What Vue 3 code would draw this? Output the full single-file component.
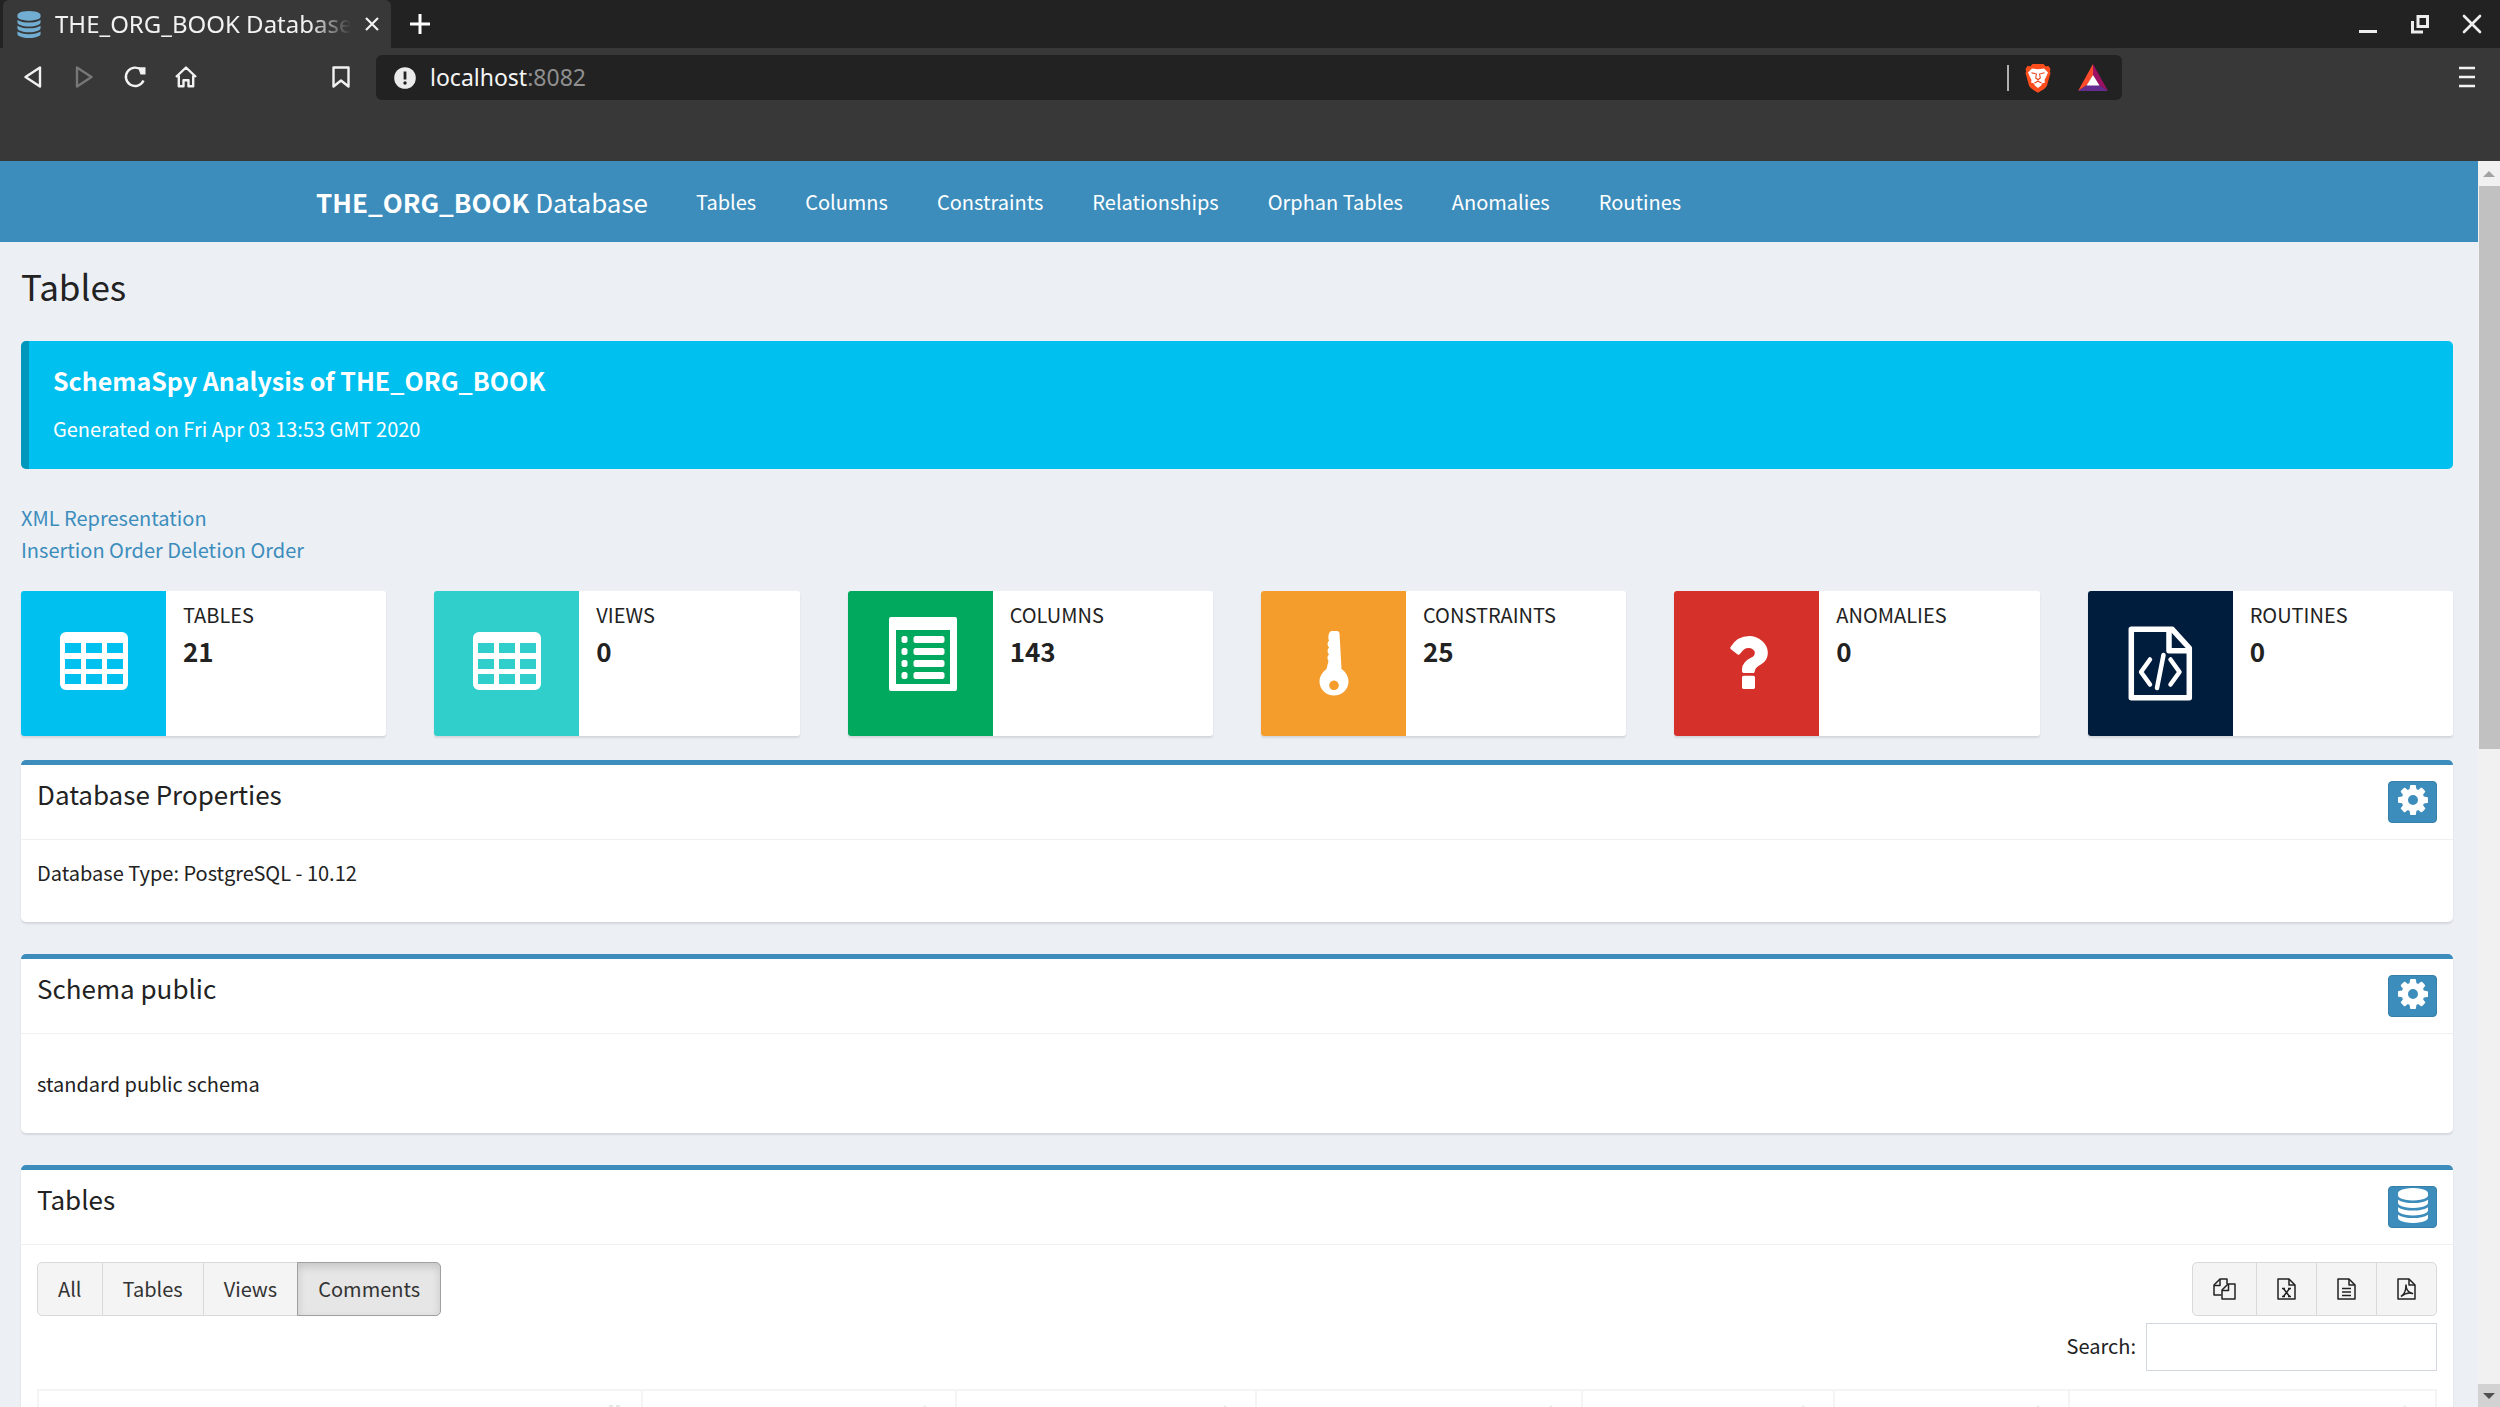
<template>
  <div class="browser">
    <div class="tab-bar">
      <div class="tab">
        <svg class="tab__icon" viewBox="128 0 1536 1792" aria-hidden="true">
          <path :d="databasePath" />
        </svg>
        <span class="tab__title">THE_ORG_BOOK Database</span>
        <button class="chrome-button tab__close" type="button" aria-label="Close tab">
          <svg width="14" height="14" viewBox="0 0 14 14">
            <path d="M1 1l12 12M13 1L1 13" stroke="#f2f2f2" stroke-width="2.2" />
          </svg>
        </button>
      </div>
      <button class="chrome-button tab-bar__new" type="button" aria-label="New tab">
        <svg width="20" height="20" viewBox="0 0 20 20">
          <path d="M10 0v20M0 10h20" stroke="#fff" stroke-width="3" />
        </svg>
      </button>
      <div class="window-controls">
        <button class="chrome-button" type="button" aria-label="Minimize">
          <svg width="20" height="20" viewBox="0 0 20 20">
            <path d="M1 17.500h18" stroke="#eee" stroke-width="3" />
          </svg>
        </button>
        <button class="chrome-button" type="button" aria-label="Restore">
          <svg width="20" height="20" viewBox="0 0 20 20" fill="none" stroke="#eee" stroke-width="3">
            <path d="M8 2.500h9.500v10H8z" />
            <path d="M2.500 7v11H13" />
          </svg>
        </button>
        <button class="chrome-button" type="button" aria-label="Close window">
          <svg width="20" height="20" viewBox="0 0 20 20">
            <path d="M2 2l16 16M18 2L2 18" stroke="#eee" stroke-width="2.600" stroke-linecap="round" />
          </svg>
        </button>
      </div>
    </div>

    <div class="toolbar">
      <div class="toolbar__nav">
        <button class="chrome-button" type="button" aria-label="Back">
          <svg width="24" height="24" viewBox="0 0 24 24" class="line-icon">
            <path d="M19 2.500v19L4.500 12z" />
          </svg>
        </button>
        <button class="chrome-button" type="button" aria-label="Forward" disabled>
          <svg width="24" height="24" viewBox="0 0 24 24" class="line-icon line-icon--muted">
            <path d="M5 2.500v19L19.500 12z" />
          </svg>
        </button>
        <button class="chrome-button" type="button" aria-label="Reload">
          <svg width="24" height="24" viewBox="0 0 24 24" class="line-icon">
            <path d="M20.500 15.500A9.200 9.200 0 1 1 18.500 5.200" />
            <path d="M15 2.200h7.500v7.300h-5z" fill="#f2f2f2" stroke="none" />
          </svg>
        </button>
        <button class="chrome-button" type="button" aria-label="Home">
          <svg width="24" height="24" viewBox="0 0 24 24" class="line-icon">
            <path d="M2 12L12 2.500 22 12M4.800 10.500v10.700h4.700v-6h5v6h4.700V10.500" />
          </svg>
        </button>
      </div>
      <button class="chrome-button toolbar__bookmark" type="button" aria-label="Bookmark">
        <svg width="20" height="24" viewBox="0 0 20 24" class="line-icon">
          <path d="M2.500 2.500h15v19L10 15.500l-7.500 6z" />
        </svg>
      </button>
      <div class="address">
        <svg width="22" height="22" viewBox="0 0 22 22" aria-hidden="true">
          <circle cx="11" cy="11" r="10.800" fill="#ebebeb" />
          <path d="M11 4.500v8" stroke="#222" stroke-width="2.800" />
          <circle cx="11" cy="16" r="1.700" fill="#222" />
        </svg>
        <div class="address__url">localhost<span class="address__port">:8082</span></div>
        <span class="address__divider"></span>
        <button class="chrome-button" type="button" aria-label="Brave Shields">
          <svg width="28" height="30" viewBox="0 0 28 30">
            <path
              d="M8.500 1L19.500 1L21.500 3.300L24.500 3L26.500 6L25.800 8.500L26.500 10L23 22.500C22 25.500 17.500 27.500 14 29.800C10.500 27.500 6 25.500 5 22.500L1.500 10L2.200 8.500L1.500 6L3.500 3L6.500 3.300z"
              fill="#fb4e1c"
            />
            <path
              d="M8 5.500L14 6.300L20 5.500L24 9.500L22.500 13L20.500 17L21 19.500L18 20.500L17.200 22.500L14 25L10.800 22.500L10 20.500L7 19.500L7.500 17L5.500 13L4 9.500z"
              fill="#fff"
            />
            <path
              d="M7.500 9.800l4.200 1M20.500 9.800l-4.200 1M12.500 10.500l-.8 4.500 2.300 1.800 2.300-1.800-.8-4.500M14 16.500v2M10.500 20l3.500-1.800 3.500 1.800"
              fill="none"
              stroke="#e8431a"
              stroke-width="1.100"
            />
          </svg>
        </button>
        <button class="chrome-button" type="button" aria-label="Brave Rewards">
          <svg width="30" height="27" viewBox="0 0 30 27">
            <path d="M15 0L0 27l9-6 6-10z" fill="#ff4a2b" />
            <path d="M15 0l15 27-9-6-6-10z" fill="#9e1063" />
            <path d="M0 27h30l-9-6H9z" fill="#662d91" />
            <path d="M15 11l6.500 10.500h-13z" fill="#fff" />
          </svg>
        </button>
      </div>
      <div class="toolbar__end">
        <button class="chrome-button" type="button" aria-label="Menu">
          <svg width="16" height="22" viewBox="0 0 16 22">
            <path d="M0 2h16M0 11h16M0 20h16" stroke="#f2f2f2" stroke-width="2.600" />
          </svg>
        </button>
      </div>
    </div>

    <div class="viewport">
      <div class="page">
        <header class="navbar">
          <a class="navbar__brand" href="#"><b>THE_ORG_BOOK</b> Database</a>
          <nav class="navbar__links">
            <a v-for="link in navLinks" :key="link" class="navbar__link" href="#">{{ link }}</a>
          </nav>
        </header>

        <main class="content">
          <h1 class="content__title">Tables</h1>

          <section class="callout">
            <h4 class="callout__title">SchemaSpy Analysis of THE_ORG_BOOK</h4>
            <p class="callout__text">Generated on Fri Apr 03 13:53 GMT 2020</p>
          </section>

          <div class="links">
            <div><a href="#">XML Representation</a></div>
            <div><a href="#">Insertion Order</a> <a href="#">Deletion Order</a></div>
          </div>

          <div class="stats">
            <div v-for="stat in stats" :key="stat.label" class="stat">
              <div class="stat__icon" :class="`stat__icon--${stat.tone}`">
                <svg width="100" height="100" viewBox="0 0 100 100" aria-hidden="true">
                  <path v-if="stat.icon === 'table'" :d="tablePath" fill-rule="evenodd" />
                  <path v-else-if="stat.icon === 'list'" :d="listPath" fill-rule="evenodd" />
                  <path v-else-if="stat.icon === 'key'" :d="keyPath" fill-rule="evenodd" />
                  <svg
                    v-else-if="stat.icon === 'question'"
                    x="32"
                    y="22"
                    width="39"
                    height="53"
                    viewBox="448 256 960 1280"
                    preserveAspectRatio="none"
                  >
                    <path :d="questionPath" />
                  </svg>
                  <g v-else fill="none" stroke="#fff" stroke-width="5.500" stroke-linejoin="round">
                    <path d="M21.300 15.300h41L79.300 34v49.700h-58z" />
                    <path d="M59 15.300v21.500h20" />
                    <path d="M40 45.500L31 58l9 12.500M60.500 45.500l9 12.500-9 12.500" stroke-width="4.500" stroke-linecap="round" />
                    <path d="M53.500 41l-6.500 33" stroke-width="4.500" stroke-linecap="round" />
                  </g>
                </svg>
              </div>
              <div class="stat__body">
                <span class="stat__label">{{ stat.label }}</span>
                <span class="stat__value">{{ stat.value }}</span>
              </div>
            </div>
          </div>

          <section class="box">
            <div class="box__header">
              <h3 class="box__title">Database Properties</h3>
              <button class="box__tool" type="button" aria-label="Toggle database properties">
                <svg width="30" height="30" viewBox="128 128 1536 1536"><path :d="cogPath" /></svg>
              </button>
            </div>
            <div class="box__body">Database Type: PostgreSQL - 10.12</div>
          </section>

          <section class="box">
            <div class="box__header">
              <h3 class="box__title">Schema public</h3>
              <button class="box__tool" type="button" aria-label="Toggle schema">
                <svg width="30" height="30" viewBox="128 128 1536 1536"><path :d="cogPath" /></svg>
              </button>
            </div>
            <div class="box__body box__body--spaced">standard public schema</div>
          </section>

          <section class="box">
            <div class="box__header">
              <h3 class="box__title">Tables</h3>
              <button class="box__tool" type="button" aria-label="Toggle tables">
                <svg width="30" height="35" viewBox="128 0 1536 1792"><path :d="databasePath" /></svg>
              </button>
            </div>
            <div class="box__body">
              <div class="controls">
                <div class="button-group">
                  <button
                    v-for="filter in filters"
                    :key="filter"
                    class="button-group__item"
                    :class="{ 'button-group__item--active': filter === activeFilter }"
                    type="button"
                    @click="activeFilter = filter"
                  >
                    {{ filter }}
                  </button>
                </div>
                <div class="button-group">
                  <button
                    v-for="item in exports"
                    :key="item.name"
                    class="button-group__item"
                    type="button"
                    :aria-label="item.name"
                  >
                    <svg :width="item.width" height="22" :viewBox="`0 0 ${item.width} 22`" class="file-icon">
                      <path v-for="d in item.paths" :key="d" :d="d" />
                    </svg>
                  </button>
                </div>
              </div>
              <div class="search">
                <label class="search__label" for="table-search">Search:</label>
                <input id="table-search" v-model="query" class="search__input" type="search" />
              </div>
              <table class="grid">
                <colgroup>
                  <col v-for="(width, i) in columnWidths" :key="i" :style="{ width: `${width}%` }" />
                </colgroup>
                <thead>
                  <tr>
                    <th v-for="(width, i) in columnWidths" :key="i">
                      <svg width="20" height="20" viewBox="0 0 20 20" aria-hidden="true">
                        <path v-if="i === 0" d="M8 1h4M15 1h4" stroke="#e8e8e8" stroke-width="2" />
                        <path v-else d="M10 0l6 7H4z" fill="#e8e8e8" />
                      </svg>
                    </th>
                  </tr>
                </thead>
              </table>
            </div>
          </section>
        </main>
      </div>

      <div class="scrollbar" aria-hidden="true">
        <div class="scrollbar__button">
          <svg width="12" height="6" viewBox="0 0 12 6"><path d="M6 0l6 6H0z" fill="#a3a3a3" /></svg>
        </div>
        <div class="scrollbar__track"><div class="scrollbar__thumb"></div></div>
        <div class="scrollbar__button scrollbar__button--down">
          <svg width="12" height="6" viewBox="0 0 12 6"><path d="M0 0h12L6 6z" fill="#505050" /></svg>
        </div>
      </div>
    </div>
  </div>
</template>

<script setup>
  import { ref } from 'vue'

  const navLinks = ['Tables', 'Columns', 'Constraints', 'Relationships', 'Orphan Tables', 'Anomalies', 'Routines']

  const stats = [
    { label: 'TABLES', value: 21, tone: 'aqua', icon: 'table' },
    { label: 'VIEWS', value: 0, tone: 'teal', icon: 'table' },
    { label: 'COLUMNS', value: 143, tone: 'green', icon: 'list' },
    { label: 'CONSTRAINTS', value: 25, tone: 'yellow', icon: 'key' },
    { label: 'ANOMALIES', value: 0, tone: 'red', icon: 'question' },
    { label: 'ROUTINES', value: 0, tone: 'navy', icon: 'code' }
  ]

  const filters = ['All', 'Tables', 'Views', 'Comments']
  const activeFilter = ref('Comments')
  const query = ref('')

  // column widths of the tables list, in percent
  const columnWidths = [25.2, 13.1, 12.5, 13.6, 10.5, 9.8, 15.3]

  const page = 'M1 1h11l6 6v14H1z'
  const fold = 'M12 1v6h6'

  const exports = [
    {
      name: 'Copy',
      width: 23,
      paths: ['M8.5 17H1V7l6-6h7v5', 'M1 7.500h6V1', 'M9 21V12l6-6h7v15z', 'M9 12.500h6.500V6']
    },
    {
      name: 'Excel',
      width: 19,
      paths: [page, fold, 'M6.500 10.500l6 8M12.500 10.500l-6 8', 'M5 10.500h3M11 10.500h3M5 18.500h3M11 18.500h3']
    },
    { name: 'CSV', width: 19, paths: [page, fold, 'M5 10.500h9M5 14h9M5 17.500h9'] },
    {
      name: 'PDF',
      width: 19,
      paths: [page, fold, 'M4 18.500c2.500-1.500 5-6 5-11.500 0 4 2.500 7.500 6.500 8.500-3-1-7-.5-11.500 3']
    }
  ]

  const tablePath =
    'M22 18h56a6 6 0 0 1 6 6v46a6 6 0 0 1-6 6H22a6 6 0 0 1-6-6V24a6 6 0 0 1 6-6z' +
    [29, 45, 60].map((y) => [21, 42, 63].map((x) => `M${x} ${y}h16v10h-16z`).join('')).join('')

  const listPath =
    'M21 3h64a2 2 0 0 1 2 2v70a2 2 0 0 1-2 2H21a2 2 0 0 1-2-2V5a2 2 0 0 1 2-2zM26 16v54h54V16z' +
    [22, 34, 46, 58]
      .map((y) => `M33 ${y}h3l1.500 1.500v4l-1.500 1.500h-3l-1.500-1.500v-4zM45 ${y}h28l1.500 1.500v4l-1.500 1.500h-28l-1.500-1.500v-4z`)
      .join('')

  const keyPath =
    'M47 17h6q2 0 2.500 2l2 36c4.500 3 7 7.500 7 12.500a14.500 14 0 0 1-29 0c0-5 3-9.500 7-12.500l2-8c-1.500-2-1.500-5 .5-6.500-2-2-2-5 0-7-2-2-2-5 0-7-1-2-1-7.500 2-9.500z' +
    'M50 66.500a4.800 4.800 0 1 0 .01 0z'

  const questionPath =
    'M1088 1256v240q0 16-12 28t-28 12h-240q-16 0-28-12t-12-28v-240q0-16 12-28t28-12h240q16 0 28 12t12 28zm316-600q0 54-15.500 101t-35 76.500-55 59.500-57.500 43.500-61 35.500q-41 23-68.500 65t-27.500 67q0 17-12 32.500t-28 15.500h-240q-15 0-25.500-18.500t-10.500-37.500v-45q0-83 65-156.500t143-108.500q59-27 84-56t25-76q0-42-46.500-74t-107.500-32q-65 0-108 29-35 25-107 115-13 16-31 16-12 0-25-8l-164-125q-13-10-15.500-25t5.500-28q160-266 464-266 80 0 161 31t146 83 106 127.500 41 158.500z'

  const cogPath =
    'M1152 896q0-106-75-181t-181-75-181 75-75 181 75 181 181 75 181-75 75-181zm512-109v222q0 12-8 23t-20 13l-185 28q-19 54-39 91 35 50 107 138 10 12 10 25t-9 23q-27 37-99 108t-94 71q-12 0-26-9l-138-108q-44 23-91 38-16 136-29 186-7 28-36 28h-222q-14 0-24.500-8.500t-11.500-21.500l-28-184q-49-16-90-37l-141 107q-10 9-25 9-14 0-25-11-126-114-165-168-7-10-7-23 0-12 8-23 15-21 51-66.500t54-70.500q-27-50-41-99l-183-27q-13-2-21-12.500t-8-23.500v-222q0-12 8-23t19-13l186-28q14-46 39-92-40-57-107-138-10-12-10-24 0-10 9-23 26-36 98.500-107.500t94.500-71.500q13 0 26 10l138 107q44-23 91-38 16-136 29-186 7-28 36-28h222q14 0 24.500 8.500t11.500 21.500l28 184q49 16 90 37l142-107q9-9 24-9 13 0 25 10 129 119 165 170 7 8 7 22 0 12-8 23-15 21-51 66.500t-54 70.500q26 50 41 98l183 28q13 2 21 12.500t8 23.500z'

  const databasePath =
    'M896 768q237 0 443-43t325-127v170q0 69-103 128t-280 93.500-385 34.500-385-34.500-280-93.500-103-128v-170q119 84 325 127t443 43zm0 768q237 0 443-43t325-127v170q0 69-103 128t-280 93.500-385 34.500-385-34.500-280-93.500-103-128v-170q119 84 325 127t443 43zm0-384q237 0 443-43t325-127v170q0 69-103 128t-280 93.500-385 34.500-385-34.500-280-93.500-103-128v-170q119 84 325 127t443 43zm0-1152q208 0 385 34.500t280 93.500 103 128v128q0 69-103 128t-280 93.500-385 34.500-385-34.500-280-93.500-103-128v-128q0-69 103-128t280-93.500 385-34.500z'
</script>

<style>
  body {
    margin: 0;
    overflow: hidden;
  }
</style>

<style scoped>
  .browser {
    display: flex;
    flex-direction: column;
    height: 100vh;
    overflow: hidden;
    background: #383838;
    color: #222;
    font-family: 'Noto Sans CJK SC', 'Noto Sans', sans-serif;
    font-size: 20px;
    line-height: 32px;
  }

  .browser *,
  .browser *::before {
    box-sizing: border-box;
  }

  .browser svg {
    display: block;
    flex: none;
  }

  .chrome-button {
    padding: 0;
    border: 0;
    background: none;
    cursor: pointer;
  }

  .line-icon {
    fill: none;
    stroke: #f2f2f2;
    stroke-width: 2.4;
    stroke-linejoin: round;
  }

  .line-icon--muted {
    stroke: #777;
  }

  /* tab strip */
  .tab-bar {
    display: flex;
    flex: none;
    align-items: center;
    height: 48px;
    padding: 0 18px 0 3px;
    background: #222;
    font-family: 'Noto Sans', sans-serif;
  }

  .tab {
    display: flex;
    align-items: center;
    width: 388px;
    height: 48px;
    padding: 0 12px 0 14px;
    border-radius: 6px 6px 0 0;
    background: #383838;
    color: #f2f2f2;
    font-size: 24px;
  }

  .tab__icon {
    width: 24px;
    height: 27px;
    fill: #72aed3;
  }

  .tab__title {
    flex: 1;
    min-width: 0;
    margin: 0 14px;
    overflow: hidden;
    white-space: nowrap;
    mask-image: linear-gradient(to right, #000 86%, transparent);
  }

  .tab-bar__new {
    margin-left: 19px;
  }

  .window-controls {
    display: flex;
    gap: 32px;
    margin-left: auto;
  }

  /* address row */
  .toolbar {
    display: flex;
    flex: none;
    align-items: flex-start;
    height: 113px;
    padding: 7px 25px 0 21px;
    font-family: 'Noto Sans', sans-serif;
    font-size: 23px;
  }

  .toolbar__nav,
  .toolbar__bookmark,
  .toolbar__end {
    display: flex;
    align-items: center;
    height: 44px;
  }

  .toolbar__nav {
    gap: 27px;
  }

  .toolbar__bookmark {
    margin: 0 25px 0 133px;
  }

  .toolbar__end {
    justify-content: flex-end;
    width: 353px;
  }

  .address {
    display: flex;
    flex: 1;
    align-items: center;
    height: 45px;
    padding: 0 14px 0 18px;
    border-radius: 6px;
    background: #222;
    color: #f5f5f5;
  }

  .address__url {
    flex: 1;
    padding: 0 0 2px 14px;
  }

  .address__port {
    color: #8f8f8f;
  }

  .address__divider {
    width: 2px;
    height: 26px;
    margin-right: 15px;
    background: #b0b0b0;
  }

  .address .chrome-button + .chrome-button {
    margin-left: 26px;
  }

  /* web page */
  .viewport {
    display: flex;
    flex: 1;
    min-height: 0;
  }

  .page {
    flex: 1;
    min-width: 0;
    overflow: hidden;
    background: #ecf0f5;
  }

  .navbar {
    display: flex;
    align-items: center;
    height: 81px;
    padding-left: 316px;
    background: #3c8dbc;
  }

  .navbar a {
    color: #fff;
    text-decoration: none;
    white-space: nowrap;
  }

  .navbar__brand {
    margin-right: 24px;
    font-size: 26px;
  }

  .navbar__links {
    display: flex;
    gap: 1px;
  }

  .navbar__link {
    padding: 24px;
  }

  .content {
    padding: 24px 25px 0 21px;
  }

  .content h1,
  .content h3,
  .content h4,
  .content p {
    margin: 0;
    font-weight: 400;
  }

  .content .content__title {
    margin-bottom: 35px;
    font-size: 35px;
    line-height: 40px;
  }

  .callout {
    padding: 23px 24px 24px;
    border-left: 8px solid #0097bc;
    border-radius: 5px;
    background: #00c0ef;
    color: #fff;
  }

  .content .callout__title {
    margin-bottom: 17px;
    font-size: 25px;
    font-weight: 600;
  }

  .links {
    margin: 33px 0 25px;
  }

  .links a {
    color: #3c8dbc;
    text-decoration: none;
  }

  .stats {
    display: grid;
    grid-template-columns: repeat(6, 1fr);
    gap: 48px;
    margin-bottom: 24px;
  }

  .stat {
    display: flex;
    height: 145px;
    overflow: hidden;
    border-radius: 3px;
    background: #fff;
    box-shadow: 0 2px 2px rgba(0, 0, 0, 0.1);
  }

  .stat__icon {
    display: flex;
    align-items: center;
    justify-content: center;
    width: 145px;
  }

  .stat__icon svg {
    fill: #fff;
  }

  .stat__icon--aqua {
    background: #00c0ef;
  }

  .stat__icon--teal {
    background: #30cfcc;
  }

  .stat__icon--green {
    background: #00a95e;
  }

  .stat__icon--yellow {
    background: #f49d2d;
  }

  .stat__icon--red {
    background: #d6302a;
  }

  .stat__icon--navy {
    background: #001d3d;
  }

  .stat__body {
    display: flex;
    flex-direction: column;
    gap: 8px;
    padding: 12px 17px;
  }

  .stat__label {
    line-height: 24px;
  }

  .stat__value {
    font-size: 26px;
    font-weight: 700;
  }

  .box {
    margin-bottom: 32px;
    border-top: 5px solid #3c8dbc;
    border-radius: 5px;
    background: #fff;
    box-shadow: 0 2px 2px rgba(0, 0, 0, 0.1);
  }

  .box__header {
    display: flex;
    align-items: flex-start;
    justify-content: space-between;
    padding: 16px;
    border-bottom: 1px solid #f0f0f0;
  }

  .box__title {
    font-size: 26px;
    line-height: 26px;
  }

  .box__tool {
    display: flex;
    align-items: center;
    justify-content: center;
    width: 49px;
    height: 42px;
    padding: 0 0 4px;
    border: 1px solid #367fa9;
    border-radius: 4px;
    background: #3c8dbc;
    cursor: pointer;
  }

  .box__tool svg {
    fill: #fff;
  }

  .box__body {
    padding: 17px 16px 33px;
  }

  .box__body--spaced {
    padding-top: 34px;
  }

  .controls {
    display: flex;
    justify-content: space-between;
  }

  .button-group {
    display: flex;
  }

  .button-group__item {
    display: flex;
    align-items: center;
    justify-content: center;
    min-width: 61px;
    height: 54px;
    margin-left: -1px;
    padding: 0 20px;
    border: 1px solid #d9d9d9;
    background: #f4f4f4;
    color: #333;
    font: inherit;
    cursor: pointer;
  }

  .button-group__item:first-child {
    margin-left: 0;
    border-radius: 5px 0 0 5px;
  }

  .button-group__item:last-child {
    border-radius: 0 5px 5px 0;
  }

  .button-group__item--active {
    border-color: #a0a0a0;
    background: #e6e6e6;
    box-shadow: inset 0 4px 8px rgba(0, 0, 0, 0.14);
  }

  .file-icon {
    fill: none;
    stroke: #222;
    stroke-width: 1.5;
    stroke-linejoin: round;
  }

  .search {
    display: flex;
    align-items: center;
    justify-content: flex-end;
    gap: 10px;
    margin: 7px 0 18px;
  }

  .search__label {
    padding-bottom: 3px;
  }

  .search__input {
    width: 291px;
    height: 48px;
    padding: 8px 16px;
    border: 1px solid #d2d6de;
    border-radius: 0;
    background: #fff;
    font: inherit;
  }

  .grid {
    width: 100%;
    border-collapse: collapse;
    table-layout: fixed;
  }

  .grid th {
    height: 60px;
    padding: 14px 20px 0 0;
    border: 2px solid #f4f4f4;
    vertical-align: top;
  }

  .grid th svg {
    margin-left: auto;
  }

  .scrollbar {
    display: flex;
    flex-direction: column;
    width: 22px;
    background: #f1f1f1;
  }

  .scrollbar__button {
    display: flex;
    align-items: center;
    justify-content: center;
    height: 25px;
  }

  .scrollbar__button--down {
    height: 23px;
    background: #d2d2d2;
  }

  .scrollbar__track {
    flex: 1;
  }

  .scrollbar__thumb {
    height: 47%;
    margin-left: 1px;
    background: #c1c1c1;
  }
</style>
